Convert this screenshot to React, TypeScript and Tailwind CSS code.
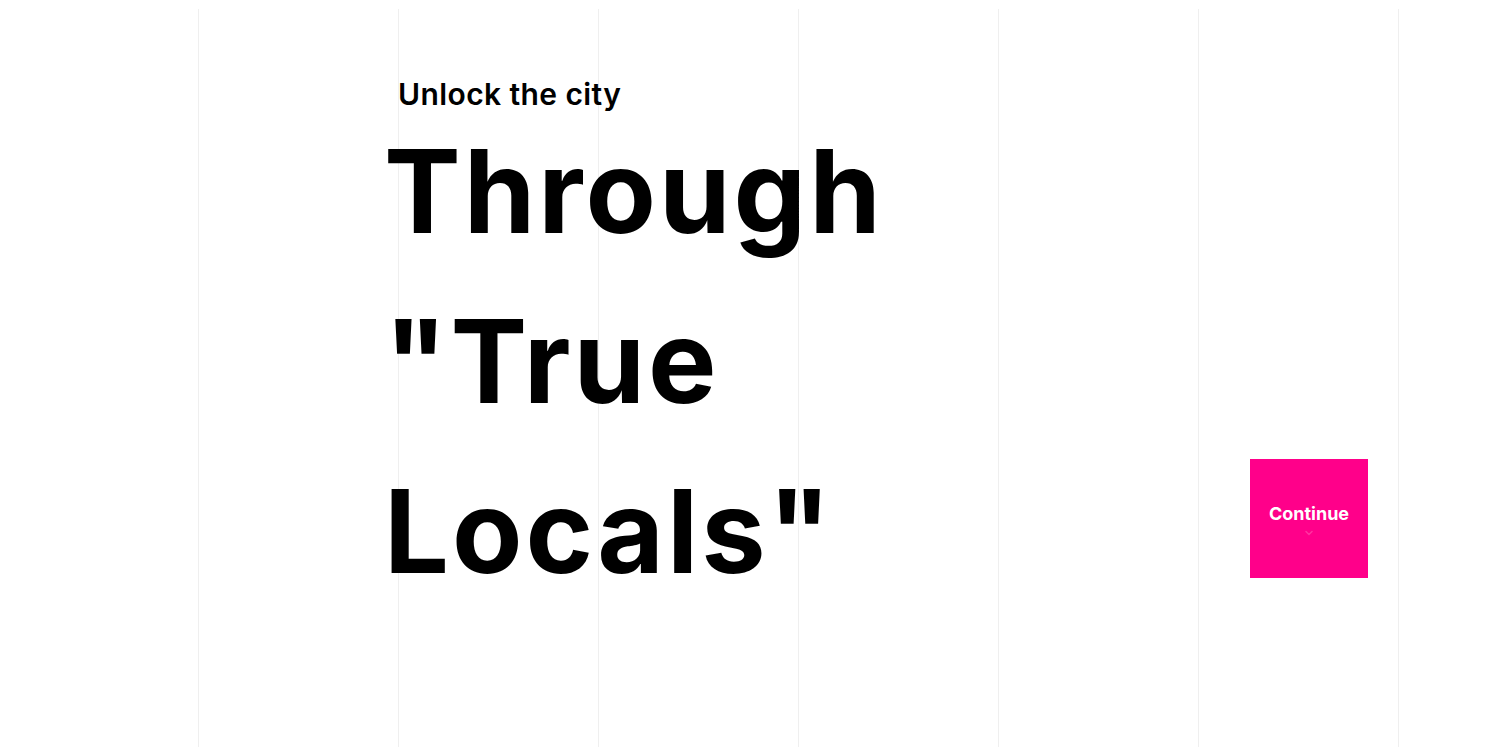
import { ChevronDown } from "lucide-react";

const cols = [0, 1, 2, 3, 4, 5, 6];

export default function App() {
  return (
    <div className="relative w-full h-[747px] bg-white overflow-hidden font-['Inter',sans-serif] text-black">
      {/* background column rules */}
      <div className="absolute inset-0 pt-[9px] pl-[198px] flex">
        {cols.map((c) => (
          <div key={c} className="w-[200px] h-full border-l border-[#efefef] shrink-0" />
        ))}
      </div>

      <div className="relative flex pl-[384px] pr-[137px] pt-[72px]">
        <div className="flex flex-col">
          <p className="pl-[14px] text-[30px] font-semibold leading-[44px] tracking-[0.4px]">
            Unlock the city
          </p>
          <h1 className="-mt-[9px] text-[115px] font-bold leading-[170px] tracking-[3px]">
            Through
            <br />
            "True
            <br />
            Locals"
          </h1>
        </div>
        <button className="ml-auto self-start mt-[387px] w-[118px] h-[119px] bg-[#ff008a] text-white flex flex-col items-center justify-center">
          <span className="text-[18px] font-bold mt-[2px]">Continue</span>
          <ChevronDown className="w-3 h-3 text-white/20" strokeWidth={3} />
        </button>
      </div>
    </div>
  );
}
